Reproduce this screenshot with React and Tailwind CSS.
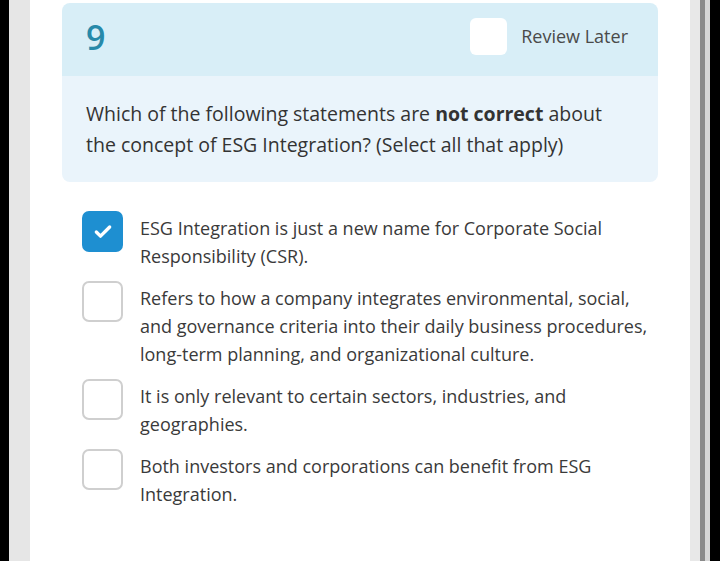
import { Check } from "lucide-react";

const options = [
  {
    text: "ESG Integration is just a new name for Corporate Social Responsibility (CSR).",
    checked: true,
  },
  {
    text: "Refers to how a company integrates environmental, social, and governance criteria into their daily business procedures, long-term planning, and organizational culture.",
    checked: false,
  },
  {
    text: "It is only relevant to certain sectors, industries, and geographies.",
    checked: false,
  },
  {
    text: "Both investors and corporations can benefit from ESG Integration.",
    checked: false,
  },
];

const Option = ({ text, checked }) => (
  <div className="flex items-start gap-[17px]">
    {checked ? (
      <div className="w-[41px] h-[41px] shrink-0 rounded-[7px] bg-[#1e8fd1] flex items-center justify-center">
        <Check className="w-[20px] h-[20px] text-white" strokeWidth={4} />
      </div>
    ) : (
      <div className="w-[41px] h-[41px] shrink-0 rounded-[7px] border-2 border-[#cfcfcf] bg-white" />
    )}
    <p className="mt-[3px] text-[18px] leading-[28px] text-[#3a3a3a]">{text}</p>
  </div>
);

const App = () => {
  return (
    <div
      className="flex h-[561px] w-[720px] overflow-hidden bg-black"
      style={{ fontFamily: '"Open Sans", "Noto Sans", sans-serif' }}
    >
      <div className="w-[9px] bg-black" />
      <div className="w-[21px] bg-[#e6e6e6]" />
      <div className="w-[660px] bg-white pt-[3px] pl-[32px] pr-[32px]">
        <div className="rounded-[8px] overflow-hidden">
          <div className="h-[73px] bg-[#d8eef7] flex items-start justify-between pl-[24px] pr-[30px] pt-[15px]">
            <span className="text-[34px] font-semibold text-[#2789a9] leading-[38px]">9</span>
            <div className="flex items-center gap-[14px] pl-[2px]">
              <div className="w-[37px] h-[37px] rounded-[6px] bg-white" />
              <span className="text-[18px] text-[#4a4a4a]">Review Later</span>
            </div>
          </div>
          <div className="bg-[#eaf4fb] pl-[24px] pr-[45px] pt-[22px] pb-[22px]">
            <p className="text-[19.5px] leading-[31px] text-[#333333]">
              Which of the following statements are <span className="font-bold">not correct</span> about
              the concept of ESG Integration? (Select all that apply)
            </p>
          </div>
        </div>
        <div className="mt-[29px] pl-[20px] pr-[4px] flex flex-col gap-[11px]">
          {options.map((o) => (
            <Option key={o.text} text={o.text} checked={o.checked} />
          ))}
        </div>
      </div>
      <div className="w-[10px] bg-[#e8e8e8]" />
      <div className="w-[5px] bg-[#8a8a8a]" />
      <div className="w-[5px] bg-[#d6d6d6]" />
      <div className="flex-1 bg-black" />
    </div>
  );
};

export default App;
